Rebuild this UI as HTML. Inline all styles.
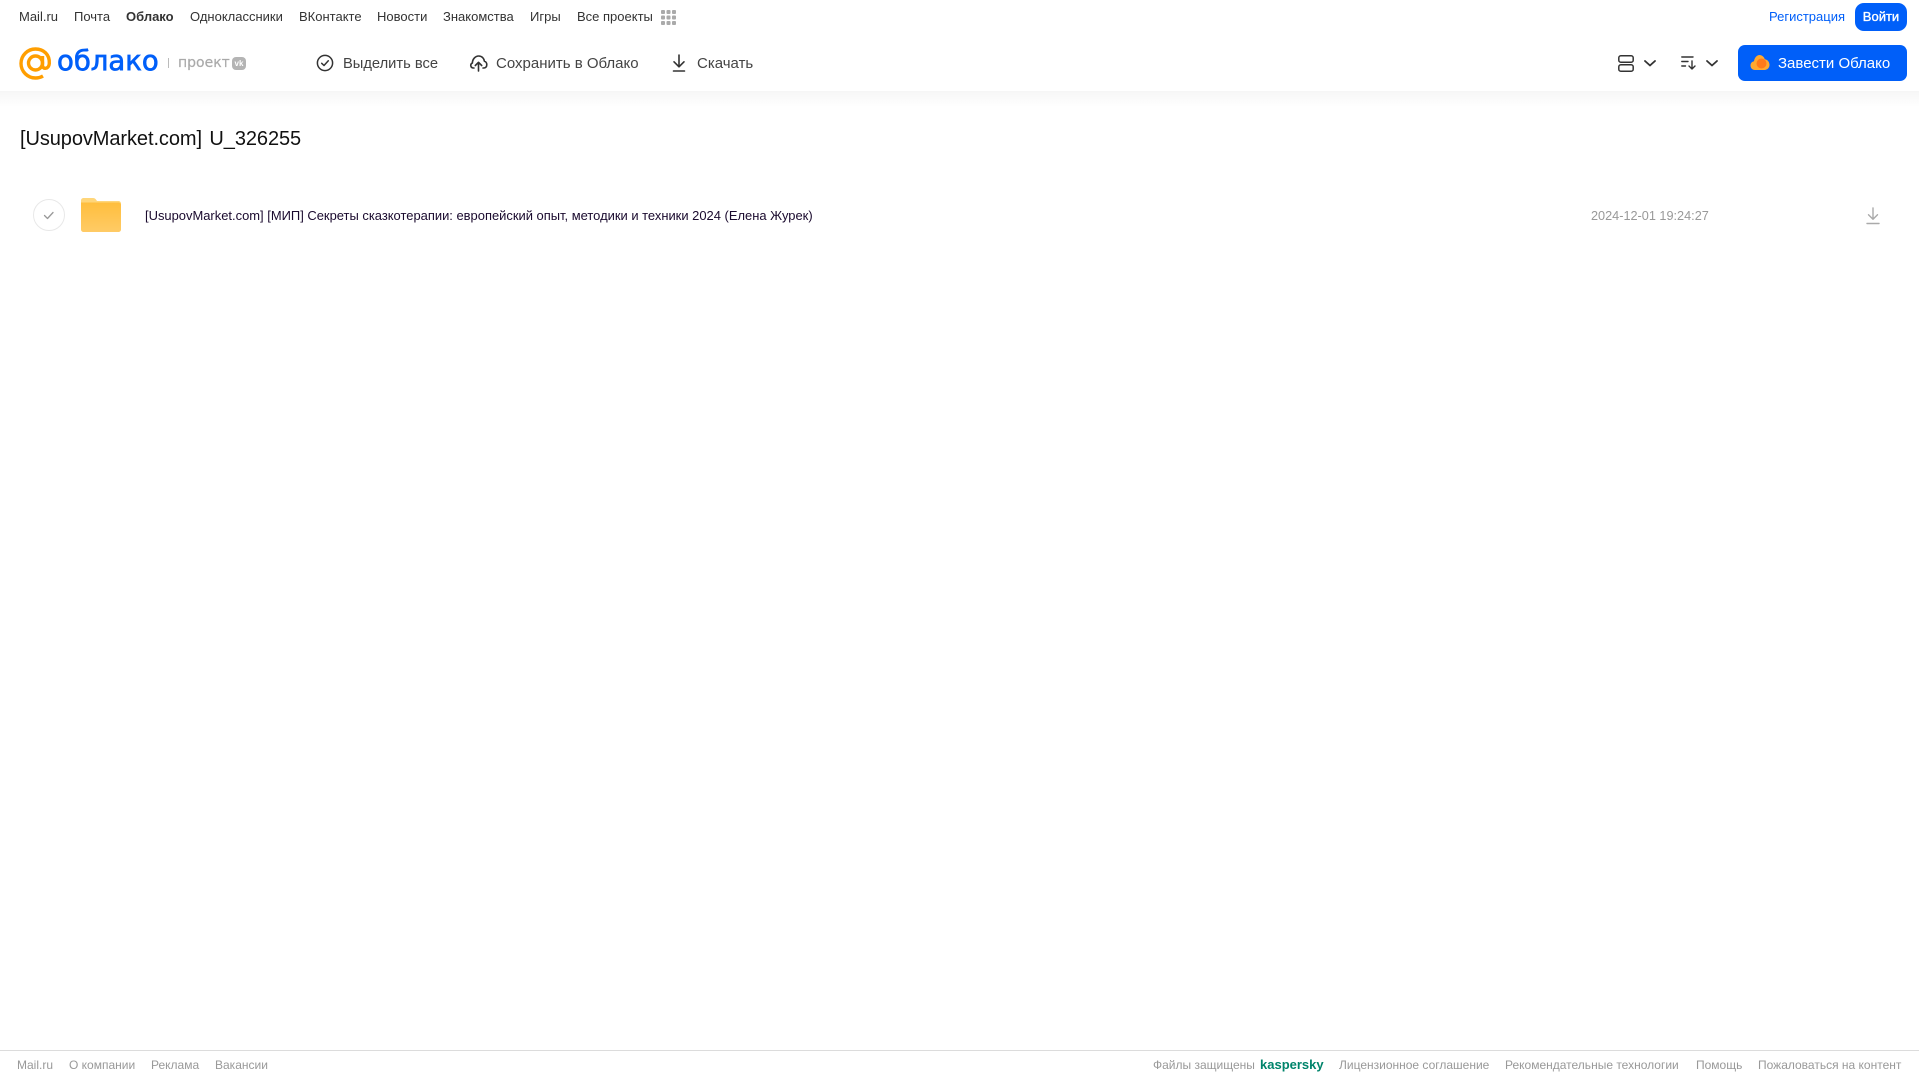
<!DOCTYPE html>
<html lang="ru"><head><meta charset="utf-8"><title>Облако</title>
<style>
html,body{margin:0;padding:0;background:#fff}
#p{position:relative;width:1919px;height:1079px;overflow:hidden;background:#fff;font-family:"Liberation Sans",Arial,sans-serif}
.t{position:absolute;white-space:nowrap;line-height:20px}
.n{top:7px;font-size:13px;color:#333}
.b{top:54px;font-size:15px;color:#444}
.f{top:1055px;font-size:12px;color:#999}
svg{position:absolute;overflow:visible}
#sh{position:absolute;left:0;top:91px;width:1919px;height:16px;background:linear-gradient(#f6f6f6,#fff)}
</style></head><body><div id="p">
<div id="sh"></div>
<span class="t n" style="left:19px">Mail.ru</span>
<span class="t n" style="left:74px">Почта</span>
<span class="t n" style="left:126px;font-weight:700">Облако</span>
<span class="t n" style="left:190px">Одноклассники</span>
<span class="t n" style="left:299px">ВКонтакте</span>
<span class="t n" style="left:377px">Новости</span>
<span class="t n" style="left:443px">Знакомства</span>
<span class="t n" style="left:530px">Игры</span>
<span class="t n" style="left:577px">Все проекты</span>
<svg style="left:661px;top:10px" width="15" height="15" fill="#aaa"><rect width="4" height="4" rx="1"/><rect x="5.5" width="4" height="4" rx="1"/><rect x="11" width="4" height="4" rx="1"/><rect y="5.5" width="4" height="4" rx="1"/><rect x="5.5" y="5.500" width="4" height="4" rx="1"/><rect x="11" y="5.500" width="4" height="4" rx="1"/><rect y="11" width="4" height="4" rx="1"/><rect x="5.5" y="11" width="4" height="4" rx="1"/><rect x="11" y="11" width="4" height="4" rx="1"/></svg>
<span class="t" style="left:1769px;top:7px;font-size:13px;color:#005ff9">Регистрация</span>
<div class="t" style="left:1855px;top:3px;width:52px;height:28px;border-radius:9px;background:#005ff9;color:#fff;font-size:13px;line-height:27px;text-align:center;-webkit-text-stroke:.35px #fff">Войти</div>

<svg style="left:19px;top:47px" width="33" height="33" viewBox="0 0 33 33" fill="none" stroke="#ff9e00" stroke-width="3.4"><circle cx="16.5" cy="16" r="7"/><path d="M23.500 9V18.500C23.500 22.500 29.900 22.500 30.300 16.500C30.900 7.500 24.500 2 16.500 2C8.500 2 2 8.500 2 16.500C2 24.500 8.500 31 16.500 31C19.500 31 22 30.200 24 29"/></svg>
<span class="t" style="left:57px;top:45px;font-family:'DejaVu Sans','Liberation Sans',sans-serif;font-size:27.5px;line-height:32px;color:#005ff9;-webkit-text-stroke:.7px #005ff9">облако</span>
<div style="position:absolute;left:168px;top:58px;width:1px;height:10px;background:#bbb"></div>
<span class="t" style="left:178px;top:53px;font-family:'DejaVu Sans','Liberation Sans',sans-serif;font-size:14px;color:#aaa;-webkit-text-stroke:.2px #aaa">проект</span>
<div class="t" style="left:232px;top:57px;width:14px;height:13px;border-radius:4px;background:#b4b4b4;color:#fff;font-size:8px;font-weight:700;line-height:13px;text-align:center">vk</div>

<svg style="left:316px;top:54px" width="18" height="18" viewBox="0 0 18 18" fill="none" stroke="#333" stroke-width="1.5"><circle cx="9" cy="9" r="7.6"/><path d="M5.700 9.300L8 11.500L12.300 6.800" stroke-linecap="round" stroke-linejoin="round"/></svg>
<span class="t b" style="left:343px;font-size:14.7px">Выделить все</span>
<svg style="left:469px;top:54px" width="19" height="18" viewBox="0 0 19 18" fill="none" stroke="#333" stroke-width="1.6" stroke-linecap="round" stroke-linejoin="round"><path d="M5 14H4.500C1.500 14 .8 10.200 3.400 9C3.400 5.500 6 2 9.800 2C13 2 15 4.500 15.400 7.200C18.600 8 18.700 13.500 15 14H14"/><path d="M9.500 17V8.500M6.300 11.500L9.500 8.300L12.700 11.500"/></svg>
<span class="t b" style="left:496px">Сохранить в Облако</span>
<svg style="left:672px;top:54px" width="14" height="18" viewBox="0 0 14 18" fill="none" stroke="#333" stroke-width="1.600" stroke-linecap="round" stroke-linejoin="round"><path d="M7 1V12.500M2 7.800L7 12.800L12 7.800"/><path d="M1.500 17H12.500"/></svg>
<span class="t b" style="left:697px">Скачать</span>

<svg style="left:1618px;top:55px" width="16" height="17" fill="none" stroke="#333" stroke-width="1.500"><rect x=".8" y=".8" width="14.400" height="6.400" rx="2"/><rect x=".8" y="9.800" width="14.400" height="6.400" rx="2"/></svg>
<svg style="left:1644px;top:60px" width="12" height="7" fill="none" stroke="#333" stroke-width="1.800" stroke-linecap="round" stroke-linejoin="round"><path d="M1 1L6 5.500L11 1"/></svg>
<svg style="left:1681px;top:56px" width="16" height="14" fill="none" stroke="#333" stroke-width="1.400" stroke-linecap="round" stroke-linejoin="round"><path d="M.8 1H12M.8 5.500H7M.8 10H4.500M11 5V13M8 10L11 13L14 10"/></svg>
<svg style="left:1706px;top:60px" width="12" height="7" fill="none" stroke="#333" stroke-width="1.800" stroke-linecap="round" stroke-linejoin="round"><path d="M1 1L6 5.500L11 1"/></svg>
<div style="position:absolute;left:1738px;top:45px;width:169px;height:36px;border-radius:7px;background:#005ff9"></div>
<svg style="left:1750px;top:54px" width="20" height="17" viewBox="0 0 20 17"><path d="M5 16C2 16 .5 13.800 .5 11.500C.5 9.300 2 7.700 4 7.300C4.500 3.500 7 1 9.500 1C12 1 14 2.800 14.800 5.200C17.500 5.500 19.500 8 19.500 10.800C19.500 13.800 17.300 16 14.500 16Z" fill="#ffa930"/><circle cx="11.500" cy="9.500" r="5" fill="#ff7a1a"/></svg>
<span class="t" style="left:1778px;top:54px;font-size:15px;color:#fff">Завести Облако</span>

<span class="t" style="left:20px;top:127px;font-size:20px;line-height:24px;color:#111;word-spacing:2px;letter-spacing:-.08px">[UsupovMarket.com] U_326255</span>
<div style="position:absolute;left:33px;top:199px;width:30px;height:30px;border:1px solid #e8e8e8;border-radius:50%"></div>
<svg style="left:43px;top:211px" width="12" height="9" fill="none" stroke="#999" stroke-width="1.300" stroke-linecap="round" stroke-linejoin="round"><path d="M1.500 4.500L4.500 7.500L10 1.500"/></svg>
<svg style="left:81px;top:198px" width="40" height="34" viewBox="0 0 40 34"><defs><linearGradient id="g" x1="0" y1="0" x2="0" y2="1"><stop offset="0" stop-color="#ffbe3d"/><stop offset="1" stop-color="#ffcb66"/></linearGradient></defs><path d="M0 2.500C0 1.100 1.100 0 2.500 0H12C13.500 0 14.500 .8 15.300 2L16 3H37.500C38.900 3 40 4.100 40 5.500V8H0Z" fill="#ffd67a"/><path d="M0 4.500H37.500C38.900 4.500 40 5.600 40 7V31.500C40 32.900 38.900 34 37.500 34H2.500C1.100 34 0 32.900 0 31.500Z" fill="url(#g)"/></svg>
<span class="t" style="left:145px;top:206px;font-size:12.95px;color:#1a0a2e">[UsupovMarket.com] [МИП] Секреты сказкотерапии: европейский опыт, методики и техники 2024 (Елена Журек)</span>
<span class="t" style="left:1591px;top:206px;font-size:12.7px;color:#999">2024-12-01 19:24:27</span>
<svg style="left:1866px;top:207px" width="14" height="18" viewBox="0 0 14 18" fill="none" stroke="#aaa" stroke-width="1.400" stroke-linecap="round" stroke-linejoin="round"><path d="M7 1V12M2.500 7.800L7 12.300L11.500 7.800"/><path d="M1 16.500H13"/></svg>

<div style="position:absolute;left:0;top:1050px;width:1919px;height:1px;background:#dcdcdc"></div>
<span class="t f" style="left:17px">Mail.ru</span>
<span class="t f" style="left:69px">О компании</span>
<span class="t f" style="left:151px">Реклама</span>
<span class="t f" style="left:215px">Вакансии</span>
<span class="t f" style="left:1153px">Файлы защищены</span>
<span class="t f" style="left:1260px;font-size:13px;font-weight:700;color:#00846b">kaspersky</span>
<span class="t f" style="left:1339px">Лицензионное соглашение</span>
<span class="t f" style="left:1505px">Рекомендательные технологии</span>
<span class="t f" style="left:1696px">Помощь</span>
<span class="t f" style="left:1758px">Пожаловаться на контент</span>
</div></body></html>
